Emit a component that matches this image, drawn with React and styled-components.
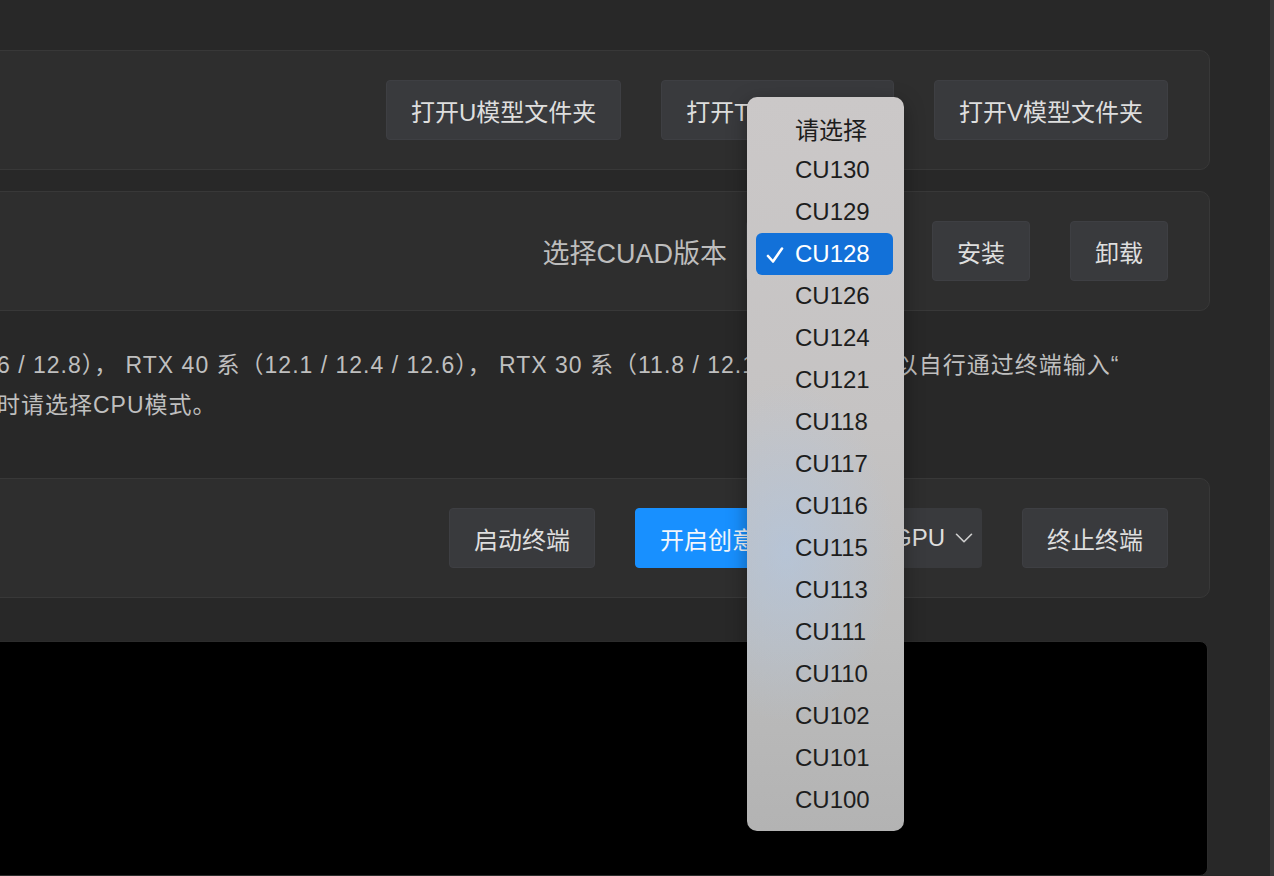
import React from 'react';
import styled, { createGlobalStyle } from 'styled-components';
import { ChevronDown } from 'lucide-react';

const GlobalStyle = createGlobalStyle`
  html, body {
    margin: 0;
    padding: 0;
    background: #282828;
    overflow: hidden;
  }
  body {
    font-family: "Liberation Sans", "Noto Sans CJK SC", sans-serif;
  }
`;

const versions = ['请选择', 'CU130', 'CU129', 'CU128', 'CU126', 'CU124', 'CU121', 'CU118', 'CU117', 'CU116', 'CU115', 'CU113', 'CU111', 'CU110', 'CU102', 'CU101', 'CU100'];

const App = () => {
  return (
    <>
      <GlobalStyle />
      <Page>
        <Main>
          <Panel>
            <Button>打开U模型文件夹</Button>
            <Button>打开T模型文件夹</Button>
            <Button>打开V模型文件夹</Button>
          </Panel>
          <Panel>
            <Label>选择CUAD版本</Label>
            <SelectWrap>
              <SelectBox />
              <Menu>
                {versions.map((v) => (
                  <MenuItem key={v} $active={v === 'CU128'}>
                    {v === 'CU128' && (
                      <Check viewBox="0 0 20 20">
                        <path d="M3 11 L8 16.5 L17 3.5" fill="none" stroke="#fff" strokeWidth="2.6" strokeLinecap="round" strokeLinejoin="round" />
                      </Check>
                    )}
                    {v}
                  </MenuItem>
                ))}
              </Menu>
            </SelectWrap>
            <Button $ml={-4}>安装</Button>
            <Button>卸载</Button>
          </Panel>
          <Note>
            <Line>6 / 12.8）， RTX 40 系（12.1 / 12.4 / 12.6）， RTX 30 系（11.8 / 12.1 / 12.4）， 可以自行通过终端输入“</Line>
            <Line>时请选择CPU模式。</Line>
          </Note>
          <Panel>
            <Button>启动终端</Button>
            <Button $primary>开启创意模式</Button>
            <DeviceSelect>
              GPU
              <ChevronDown size={30} strokeWidth={1.3} />
            </DeviceSelect>
            <Button>终止终端</Button>
          </Panel>
          <Terminal />
        </Main>
        <Scrollbar />
      </Page>
    </>
  );
};

const Page = styled.div`
  display: flex;
  width: 1274px;
  height: 876px;
  overflow: hidden;
`;

const Main = styled.div`
  flex: 1;
  display: flex;
  flex-direction: column;
  margin-left: -20px;
  padding: 50px 60px 0 0;
`;

const Scrollbar = styled.div`
  width: 4px;
  background: #3a3a3a;
`;

const Panel = styled.div`
  display: flex;
  align-items: center;
  justify-content: flex-end;
  gap: 40px;
  padding: 29px 41px 29px 0;
  background: #2e2e2e;
  border: 1px solid #383838;
  border-radius: 10px;
  margin-bottom: 21px;
`;

const Button = styled.div`
  height: 60px;
  display: flex;
  align-items: center;
  padding: 0 24px;
  box-sizing: border-box;
  border-radius: 4px;
  font-size: 24px;
  color: ${(p) => (p.$primary ? '#f2f6fb' : '#dedede')};
  background: ${(p) => (p.$primary ? '#1890ff' : '#393a3d')};
  border: 1px solid ${(p) => (p.$primary ? '#1890ff' : '#3e3f43')};
  margin-left: ${(p) => p.$ml || 0}px;
  white-space: nowrap;
`;

const Label = styled.div`
  font-size: 27px;
  color: #bdbdbd;
  margin-right: -21px;
`;

const SelectWrap = styled.div`
  position: relative;
  width: 150px;
  height: 60px;
`;

const SelectBox = styled.div`
  width: 100%;
  height: 100%;
  background: #393a3d;
  border-radius: 4px;
`;

const Menu = styled.div`
  position: absolute;
  left: 1px;
  top: -124px;
  width: 157px;
  box-sizing: border-box;
  padding: 10px 11px 10px 9px;
  border-radius: 10px;
  background:
    radial-gradient(ellipse 110px 170px at 25% 62%, rgba(175, 200, 232, 0.55), rgba(175, 200, 232, 0)),
    linear-gradient(#cbc8c8, #c5c3c3 45%, #bcbcbc 75%, #b3b3b3);
  box-shadow: 0 6px 20px rgba(0, 0, 0, 0.35);
  z-index: 10;
`;

const MenuItem = styled.div`
  position: relative;
  height: 42px;
  display: flex;
  align-items: center;
  padding-left: 39px;
  font-size: 24px;
  color: ${(p) => (p.$active ? '#ffffff' : '#1d1d1d')};
  background: ${(p) => (p.$active ? '#1271d9' : 'transparent')};
  border-radius: 6px;
`;

const Check = styled.svg`
  position: absolute;
  left: 9px;
  top: 12px;
  width: 20px;
  height: 20px;
`;

const Note = styled.div`
  padding: 13px 0 0 17px;
  margin-bottom: 53px;
  font-size: 23px;
  line-height: 40px;
  letter-spacing: 1px;
  color: #bfbfbf;
  white-space: nowrap;
`;

const Line = styled.div``;

const DeviceSelect = styled.div`
  height: 60px;
  width: 113px;
  box-sizing: border-box;
  display: flex;
  align-items: center;
  justify-content: space-between;
  padding: 0 3px 0 24px;
  border-radius: 4px;
  background: #393a3d;
  color: #dedede;
  font-size: 24px;
  svg {
    flex-shrink: 0;
    color: #cfcfcf;
  }
`;

const Terminal = styled.div`
  margin-top: 22px;
  margin-right: 2px;
  height: 300px;
  background: #000;
  border: 1px solid #2c2c2c;
  border-radius: 8px;
`;

export default App;
